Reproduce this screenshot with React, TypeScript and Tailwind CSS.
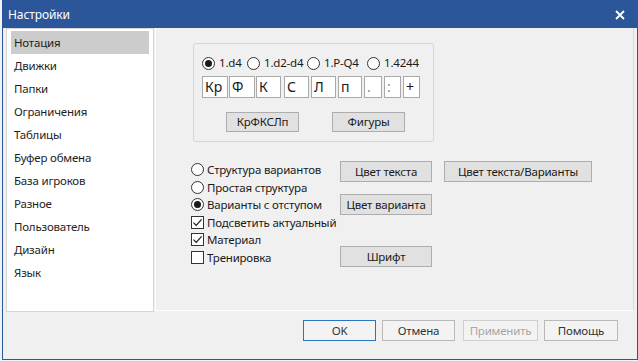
import React from "react";

const sections = [
  "Нотация",
  "Движки",
  "Папки",
  "Ограничения",
  "Таблицы",
  "Буфер обмена",
  "База игроков",
  "Разное",
  "Пользователь",
  "Дизайн",
  "Язык",
];

const pieces = [
  { t: "Кр", w: "w-[26px]", ml: "ml-0" },
  { t: "Ф", w: "w-[26px]", ml: "ml-[1px]" },
  { t: "К", w: "w-[25px]", ml: "ml-[1px]" },
  { t: "С", w: "w-[25px]", ml: "ml-[3px]" },
  { t: "Л", w: "w-[25px]", ml: "ml-[2px]" },
  { t: "п", w: "w-[24px]", ml: "ml-[2px]" },
  { t: ".", w: "w-[18px]", ml: "ml-[2px]" },
  { t: ":", w: "w-[17px]", ml: "ml-[2px]" },
  { t: "+", w: "w-[17px]", ml: "ml-[2px]" },
];

function Radio({ checked }: { checked?: boolean }) {
  return (
    <span className="w-[13px] h-[13px] rounded-full border border-[#333333] bg-white flex items-center justify-center shrink-0">
      {checked && <span className="w-[7px] h-[7px] rounded-full bg-[#1a1a1a]" />}
    </span>
  );
}

function Check({ checked }: { checked?: boolean }) {
  return (
    <span className="w-[13px] h-[13px] border border-[#333333] bg-white flex items-center justify-center shrink-0">
      {checked && (
        <svg width="11" height="11" viewBox="0 0 11 11">
          <path d="M1.5 5.6 L4.2 8.4 L9.6 2.3" fill="none" stroke="#1a1a1a" strokeWidth="1.2" />
        </svg>
      )}
    </span>
  );
}

function GrayButton({ label, className }: { label: string; className: string }) {
  return (
    <button className={`${className} bg-[#e1e1e1] border border-[#adadad] text-[11.5px] tracking-[-0.2px] text-[#1a1a1a] flex items-center justify-center whitespace-nowrap`}>
      {label}
    </button>
  );
}

function App() {
  return (
    <div className="w-[638px] h-[361px] bg-[#eef3fa] font-['Noto_Sans',sans-serif]">
      <div className="ml-[2px] w-[636px] h-[360px] border border-[#2b579a] bg-[#f0f0f0] flex flex-col">
        {/* Title */}
        <div className="h-[27px] bg-[#2b579a] flex items-center justify-between pl-[5px] pr-[12px] shrink-0">
          <span className="text-white text-[12px] tracking-[-0.1px]">Настройки</span>
          <svg width="10" height="10" viewBox="0 0 10 10">
            <path d="M1 1 L9 9 M9 1 L1 9" stroke="white" strokeWidth="1.8" />
          </svg>
        </div>

        <div className="flex pl-[3px] h-[284px] shrink-0 text-[11.5px] tracking-[-0.2px]">
          {/* List */}
          <div className="w-[148px] h-[284px] border border-[#d5d5d5] bg-white pt-[2px] px-[4px]">
            {sections.map((s, i) => (
              <div
                key={s}
                className={`h-[23px] flex items-center pl-[3px] text-[#1e1e1e] ${i === 0 ? "bg-[#cccccc]" : ""}`}
              >
                {s}
              </div>
            ))}
          </div>

          {/* Page */}
          <div className="ml-[1px] w-[479px] h-[283px] border-l border-b border-white border-r border-r-[#dadada] text-[#1a1a1a]">
            <div className="ml-[37px] mt-[15px] w-[241px] h-[99px] border border-[#d6d6d6] rounded-[3px]">
              <div className="mt-[12px] pl-[8px] h-[14px] flex items-center whitespace-nowrap">
                <div className="w-[45px] flex items-center gap-[4px]">
                  <Radio checked />
                  <span>1.d4</span>
                </div>
                <div className="w-[60px] flex items-center gap-[4px]">
                  <Radio />
                  <span>1.d2-d4</span>
                </div>
                <div className="w-[60px] flex items-center gap-[4px]">
                  <Radio />
                  <span>1.P-Q4</span>
                </div>
                <div className="flex items-center gap-[4px]">
                  <Radio />
                  <span>1.4244</span>
                </div>
              </div>

              <div className="mt-[6px] pl-[8px] flex">
                {pieces.map((p) => (
                  <div
                    key={p.t}
                    className={`${p.w} ${p.ml} h-[22px] bg-white border border-[#a9a9a9] flex items-center pl-[2px] text-[14px] tracking-normal leading-none ${p.t === "." || p.t === ":" ? "text-[#8a8a8a]" : "text-[#1a1a1a]"}`}
                  >
                    {p.t}
                  </div>
                ))}
              </div>

              <div className="mt-[14px] pl-[32px] flex">
                <GrayButton label="КрФКСЛп" className="w-[73px] h-[20px]" />
                <GrayButton label="Фигуры" className="ml-[33px] w-[73px] h-[20px]" />
              </div>
            </div>

            <div className="mt-[19px] ml-[35px] flex">
              <div className="w-[149px] whitespace-nowrap">
                <div className="h-[17.5px] flex items-center gap-[3px]">
                  <Radio />
                  <span>Структура вариантов</span>
                </div>
                <div className="h-[17.5px] flex items-center gap-[3px]">
                  <Radio />
                  <span>Простая структура</span>
                </div>
                <div className="h-[17.5px] flex items-center gap-[3px]">
                  <Radio checked />
                  <span>Варианты с отступом</span>
                </div>
                <div className="h-[17.5px] flex items-center gap-[3px]">
                  <Check checked />
                  <span>Подсветить актуальный</span>
                </div>
                <div className="h-[17.5px] flex items-center gap-[3px]">
                  <Check checked />
                  <span>Материал</span>
                </div>
                <div className="h-[17.5px] flex items-center gap-[3px]">
                  <Check />
                  <span>Тренировка</span>
                </div>
              </div>

              <div className="w-[92px] flex flex-col">
                <GrayButton label="Цвет текста" className="w-[92px] h-[21px]" />
                <GrayButton label="Цвет варианта" className="mt-[12px] w-[92px] h-[21px]" />
                <GrayButton label="Шрифт" className="mt-[31px] w-[92px] h-[21px]" />
              </div>

              <div className="ml-[12px]">
                <GrayButton label="Цвет текста/Варианты" className="w-[148px] h-[21px]" />
              </div>
            </div>
          </div>
        </div>

        {/* Footer buttons */}
        <div className="pt-[8px] pl-[300px] flex text-[11.5px] tracking-[-0.2px]">
          <button className="w-[73px] h-[21px] bg-[#f3f3f3] border border-[#2a73c0] text-[#333333]">OK</button>
          <button className="ml-[6px] w-[73px] h-[21px] bg-[#f3f3f3] border border-[#b9b9b9] text-[#333333]">Отмена</button>
          <button className="ml-[8px] w-[75px] h-[21px] bg-[#f3f3f3] border border-[#cfcfcf] text-[#a6a6a6]">Применить</button>
          <button className="ml-[6px] w-[74px] h-[21px] bg-[#f3f3f3] border border-[#b9b9b9] text-[#333333]">Помощь</button>
        </div>
      </div>
    </div>
  );
}

export default App;
